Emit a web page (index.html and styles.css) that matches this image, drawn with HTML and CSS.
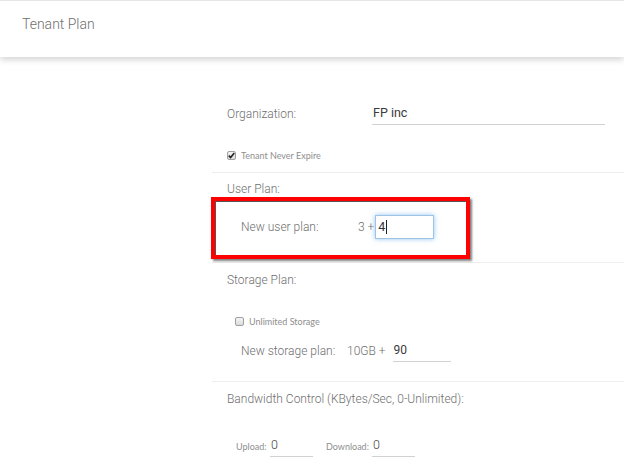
FILE: index.html
```html
<!DOCTYPE html>
<html>
<head>
<meta charset="utf-8">
<link rel="stylesheet" href="styles.css">
</head>
<body>
<header class="header"><h1 class="title">Tenant Plan</h1></header>
<main class="form">
  <section class="sec sec-org">
    <div class="row org-row">
      <span class="label org-label">Organization:</span>
      <span class="field org-field">FP inc</span>
    </div>
    <div class="check-row never-row">
      <span class="cb cb-on"><svg viewBox="0 0 9 9" width="9" height="9"><path d="M1.8 4.6 L3.6 6.6 L7.3 2" fill="none" stroke="#222" stroke-width="1.6"/></svg></span>
      <span class="small">Tenant Never Expire</span>
    </div>
  </section>
  <section class="sec sec-user">
    <div class="label head">User Plan:</div>
    <div class="highlight">
      <div class="row plan-row">
        <span class="label user-label">New user plan:</span>
        <span class="label base">3 +</span>
        <span class="focus-input">4<span class="caret"></span></span>
      </div>
    </div>
  </section>
  <section class="sec sec-storage">
    <div class="label head">Storage Plan:</div>
    <div class="check-row unl-row">
      <span class="cb"></span>
      <span class="small">Unlimited Storage</span>
    </div>
    <div class="row storage-row">
      <span class="label storage-label">New storage plan:</span>
      <span class="label base gb">10GB +</span>
      <span class="field small-field">90</span>
    </div>
  </section>
  <section class="sec sec-bw">
    <div class="label head">Bandwidth Control (KBytes/Sec, 0-Unlimited):</div>
    <div class="row bw-row">
      <span class="small up-label">Upload:</span>
      <span class="field bw-field">0</span>
      <span class="small down-label">Download:</span>
      <span class="field bw-field">0</span>
    </div>
  </section>
</main>
</body>
</html>
```
FILE: styles.css
```css
html, body {
  margin: 0;
  padding: 0;
  background: #fff;
  font-family: Roboto, "Liberation Sans", sans-serif;
  color: #777;
  overflow: hidden;
}
.header {
  border-top: 1px solid #e6e6e6;
  height: 56px;
  background: #fff;
  box-shadow: 0 3px 6px rgba(0, 0, 0, 0.16);
  position: relative;
  z-index: 1;
}
.title {
  margin: 0;
  padding: 15px 0 0 22px;
  font-size: 14px;
  font-weight: 300;
  line-height: 16px;
  color: #6f6f6f;
}
.form {
  padding-left: 212px;
}
.sec {
  border-bottom: 1px solid #eeeeee;
  padding-left: 15px;
}
.label {
  font-size: 12px;
  font-weight: 300;
  line-height: 16px;
  color: #6f6f6f;
}
.small {
  font-family: Lato, "Open Sans", sans-serif;
  font-size: 9px;
  font-weight: 400;
  color: #8e8e8e;
}
.row {
  display: flex;
  align-items: flex-end;
}
.check-row {
  display: flex;
  align-items: center;
  gap: 5px;
  height: 14px;
}
.cb {
  box-sizing: border-box;
  width: 9px;
  height: 9px;
  border: 1px solid #a0a0a0;
  border-radius: 2px;
  background: linear-gradient(#f4f4f4, #dcdcdc);
  display: flex;
  align-items: center;
  justify-content: center;
}
.cb svg { display: block; margin: -1px; }
.field {
  box-sizing: border-box;
  border-bottom: 1px solid #d2d2d2;
  font-size: 12px;
  color: #3a3a3a;
  line-height: 16px;
  padding: 0 0 3px 1px;
}

/* section 1 */
.sec-org { padding-top: 45px; padding-bottom: 10px; }
.org-row { height: 23px; }
.org-label { width: 145px; padding-bottom: 3px; }
.org-field { width: 233px; font-size: 12.5px; }
.never-row { margin-top: 23px; }

/* section 2 */
.sec-user { padding-top: 8px; padding-bottom: 3px; }
.highlight {
  margin: 0 0 0 -16px;
  width: 259px;
  height: 62px;
  box-sizing: border-box;
  border: 4px solid #f00;
  box-shadow: inset 1px 1px 0 #555, 2px 2px 2px rgba(0, 0, 0, 0.5);
  padding: 14px 0 0 26px;
}
.plan-row { align-items: center; height: 24px; }
.user-label { width: 117px; }
.base { margin-right: 1px; }
.focus-input {
  box-sizing: border-box;
  width: 59px;
  height: 24px;
  border: 1px solid #9ec3e6;
  box-shadow: 0 0 5px rgba(102, 175, 233, 0.7);
  font-size: 12.5px;
  color: #333;
  line-height: 22px;
  padding-left: 2px;
  display: flex;
  align-items: center;
}
.caret {
  width: 1px;
  height: 14px;
  background: #222;
  margin-left: 1px;
}

/* section 3 */
.sec-storage { padding-top: 9px; padding-bottom: 19px; }
.unl-row { margin-top: 26px; padding-left: 8px; }
.storage-row { margin-top: 12px; height: 22px; padding-left: 14px; }
.storage-label { width: 106px; padding-bottom: 3px; }
.gb { padding-bottom: 3px; margin-right: 7px; }
.small-field { width: 58px; }

/* section 4 */
.sec-bw { padding-top: 9px; padding-bottom: 0; border-bottom: none; }
.bw-row { margin-top: 27px; height: 23px; padding-left: 9px; }
.up-label { width: 34px; padding-bottom: 5px; }
.down-label { width: 46px; padding-bottom: 5px; margin-left: 13px; }
.bw-field { width: 43px; font-size: 12.5px; font-weight: 300; color: #444; }
```
